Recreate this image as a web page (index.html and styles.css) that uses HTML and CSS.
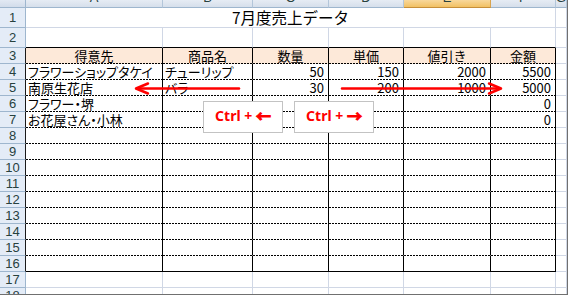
FILE: index.html
```html
<!DOCTYPE html>
<html lang="ja">
<head>
<meta charset="utf-8">
<title>7月度売上データ</title>
<link rel="stylesheet" href="styles.css">
</head>
<body>
<div class="frame">
  <div class="sheet">
    <div class="ch corner"></div>
    <div class="ch"><span>A</span></div>
    <div class="ch"><span>B</span></div>
    <div class="ch"><span>C</span></div>
    <div class="ch"><span>D</span></div>
    <div class="ch sel"><span>E</span></div>
    <div class="ch"><span>F</span></div>
    <div class="ch"><span>G</span></div>

    <div class="rh r20">1</div>
    <div class="title">7月度売上データ</div>
    <div></div>

    <div class="rh r20">2</div>
    <div class="tb"></div><div class="tb"></div><div class="tb"></div><div class="tb"></div><div class="tb"></div><div class="tb"></div>
    <div></div>

    <div class="rh in">3</div>
    <div class="t hd">得意先</div><div class="t hd">商品名</div><div class="t hd">数量</div><div class="t hd">単価</div><div class="t hd">値引き</div><div class="t hd">金額</div>
    <div></div>

    <div class="rh in">4</div>
    <div class="t">フラワーショップタケイ</div><div class="t">チューリップ</div><div class="t num">50</div><div class="t num">150</div><div class="t num">2000</div><div class="t num">5500</div>
    <div></div>

    <div class="rh in">5</div>
    <div class="t">南原生花店</div><div class="t">バラ</div><div class="t num">30</div><div class="t num">200</div><div class="t num">1000</div><div class="t num">5000</div>
    <div></div>

    <div class="rh in">6</div>
    <div class="t">フラワー・堺</div><div class="t"></div><div class="t"></div><div class="t"></div><div class="t"></div><div class="t num">0</div>
    <div></div>

    <div class="rh in">7</div>
    <div class="t">お花屋さん・小林</div><div class="t"></div><div class="t"></div><div class="t"></div><div class="t"></div><div class="t num">0</div>
    <div></div>

    <div class="rh in">8</div>
    <div class="t"></div><div class="t"></div><div class="t"></div><div class="t"></div><div class="t"></div><div class="t"></div>
    <div></div>

    <div class="rh in">9</div>
    <div class="t"></div><div class="t"></div><div class="t"></div><div class="t"></div><div class="t"></div><div class="t"></div>
    <div></div>

    <div class="rh in">10</div>
    <div class="t"></div><div class="t"></div><div class="t"></div><div class="t"></div><div class="t"></div><div class="t"></div>
    <div></div>

    <div class="rh in">11</div>
    <div class="t"></div><div class="t"></div><div class="t"></div><div class="t"></div><div class="t"></div><div class="t"></div>
    <div></div>

    <div class="rh in">12</div>
    <div class="t"></div><div class="t"></div><div class="t"></div><div class="t"></div><div class="t"></div><div class="t"></div>
    <div></div>

    <div class="rh in">13</div>
    <div class="t"></div><div class="t"></div><div class="t"></div><div class="t"></div><div class="t"></div><div class="t"></div>
    <div></div>

    <div class="rh in">14</div>
    <div class="t"></div><div class="t"></div><div class="t"></div><div class="t"></div><div class="t"></div><div class="t"></div>
    <div></div>

    <div class="rh in">15</div>
    <div class="t"></div><div class="t"></div><div class="t"></div><div class="t"></div><div class="t"></div><div class="t"></div>
    <div></div>

    <div class="rh in">16</div>
    <div class="t end"></div><div class="t end"></div><div class="t end"></div><div class="t end"></div><div class="t end"></div><div class="t end"></div>
    <div></div>

    <div class="rh">17</div>
    <div></div><div></div><div></div><div></div><div></div><div></div><div></div>

    <div class="rh">18</div>
    <div></div><div></div><div></div><div></div><div></div><div></div><div></div>
  </div>

  <svg class="arrows" width="568" height="295" viewBox="0 0 568 295">
    <g stroke="#ff0000" stroke-width="2.5" fill="none" stroke-linecap="round" stroke-linejoin="round">
      <line x1="239" y1="88.5" x2="137" y2="88.5"/>
      <polyline points="148,83.5 136,88.5 148,93.5"/>
      <line x1="342" y1="88.5" x2="500" y2="88.5"/>
      <polyline points="489,83.5 501,88.5 489,93.5"/>
    </g>
  </svg>

  <div class="key key-left">Ctrl + <span class="ar">←</span></div>
  <div class="key key-right">Ctrl + <span class="ar">→</span></div>
</div>
</body>
</html>
```

FILE: styles.css
```css
html, body {
  margin: 0;
  padding: 0;
  background: #fff;
}
body {
  width: 568px;
  height: 295px;
  overflow: hidden;
  font-family: "Noto Sans CJK JP", "Liberation Sans", sans-serif;
}
.frame {
  position: relative;
  width: 567px;
  height: 294px;
  border-right: 1px solid #707070;
  border-bottom: 1px solid #707070;
  overflow: hidden;
}
.sheet {
  display: grid;
  grid-template-columns: 26px 137px 90px 76px 75px 87px 65px 11px;
  grid-template-rows: 8px 20px 20px repeat(16, 16px);
}
.sheet > div {
  box-sizing: border-box;
  border-right: 1px solid #d0d7e5;
  border-bottom: 1px solid #d0d7e5;
  font-size: 13px;
  line-height: 15px;
  white-space: nowrap;
  overflow: hidden;
  color: #000;
  padding: 0 2px;
  font-feature-settings: "palt" 1;
}
.sheet > div.ch {
  padding: 0;
  background: linear-gradient(#e6ecf4, #d6dfeb);
  border-right-color: #b3c6da;
  border-bottom-color: #9eb6ce;
  text-align: center;
  font-family: "Liberation Sans", sans-serif;
  font-size: 13px;
  line-height: 7px;
  color: #27413e;
}
.ch span {
  display: inline-block;
  transform: translateY(-6px);
}
.sheet > div.ch.sel {
  background: linear-gradient(#f8d89c, #f2c163);
  border-right-color: #d9a44f;
  border-bottom-color: #c68f3a;
}
.sheet > div.corner {
  background: linear-gradient(#e2e9f3, #d2dcea);
  border-right-color: #9eb6ce;
}
.sheet > div.rh {
  padding: 0;
  background: #e4ecf7;
  border-right-color: #9eb6ce;
  border-bottom-color: #9eb6ce;
  text-align: center;
  color: #27413e;
  font-family: "Liberation Sans", sans-serif;
  font-size: 13px;
  line-height: 15px;
}
.sheet > div.rh.r20 {
  line-height: 19px;
}
.sheet > div.rh.in {
  border-right-color: #1a1a1a;
}
.sheet > div.title {
  grid-column: span 6;
  text-align: center;
  font-size: 15.5px;
  line-height: 19px;
  font-feature-settings: normal;
}
.sheet > div.tb {
  border-bottom-color: #000;
}
.sheet > div.t {
  border-right-color: #000;
  border-bottom-color: transparent;
  background-image: repeating-linear-gradient(to right, #000 0 2px, transparent 2px 3px);
  background-size: 100% 1px;
  background-position: left bottom;
  background-repeat: no-repeat;
  background-origin: border-box;
}
.sheet > div.t.hd {
  background-color: #fde9d9;
  text-align: center;
  font-feature-settings: normal;
}
.sheet > div.t.end {
  background-image: none;
  border-bottom-color: #000;
}
.sheet > div.num {
  text-align: right;
  padding-right: 4px;
}
.arrows {
  position: absolute;
  left: 0;
  top: 0;
  pointer-events: none;
}
.key {
  position: absolute;
  top: 101px;
  box-sizing: border-box;
  width: 80px;
  height: 32px;
  border: 1px solid #c3c3c3;
  background: #fff;
  display: flex;
  align-items: center;
  justify-content: center;
  padding-bottom: 3px;
  font-family: "Noto Sans", "Liberation Sans", sans-serif;
  font-weight: 700;
  font-size: 14px;
  color: #ff0000;
  white-space: pre;
}
.key .ar {
  font-family: "Noto Sans CJK JP", sans-serif;
  font-weight: 700;
  font-size: 15px;
  -webkit-text-stroke: 0.9px #ff0000;
}
.key-left {
  left: 203px;
}
.key-right {
  left: 294px;
}
```
